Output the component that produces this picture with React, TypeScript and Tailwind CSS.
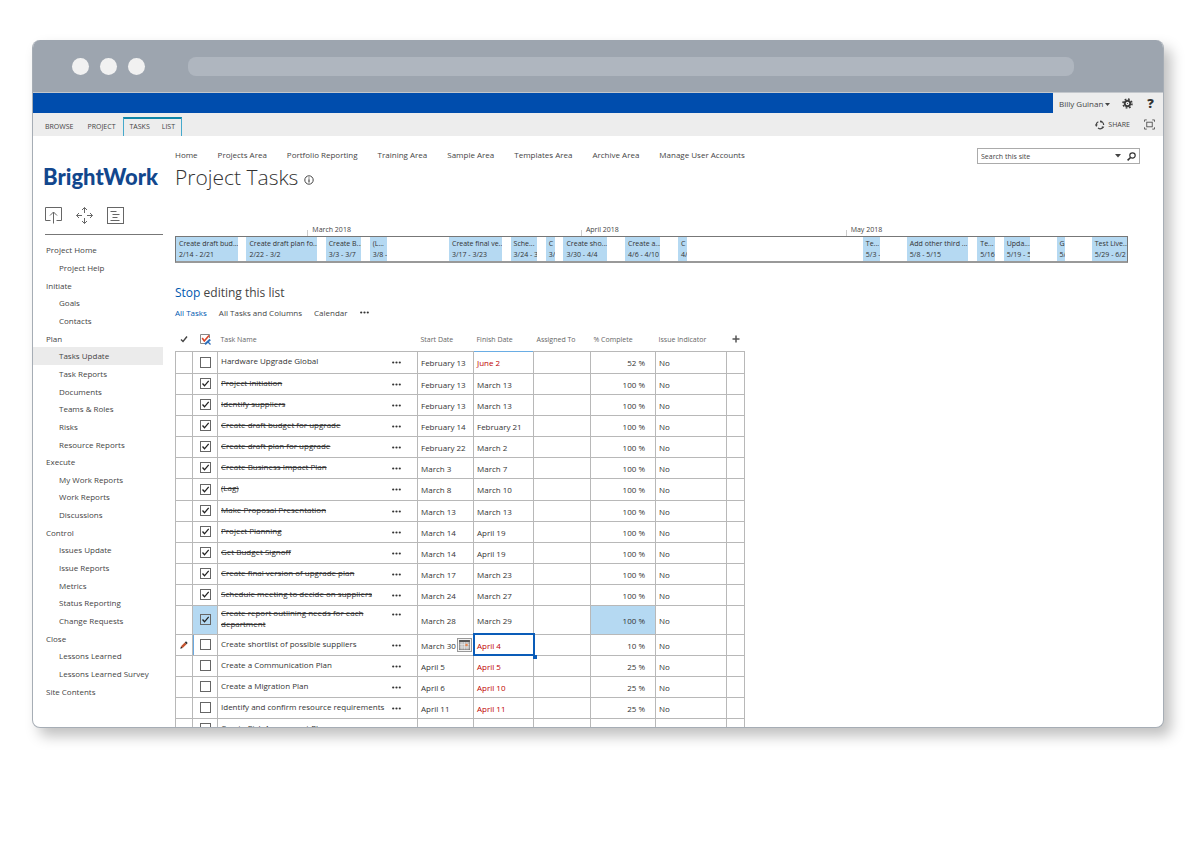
import { clsx } from 'clsx';

interface TimelineItem {
  start: number;
  days: number;
  label: string;
  range: string;
}

interface Task {
  name: string;
  start: string;
  finish: string;
  complete: number;
  done?: boolean;
  late?: boolean;
}

const TIMELINE_DAYS = 108;

const areas = [
  'Home',
  'Projects Area',
  'Portfolio Reporting',
  'Training Area',
  'Sample Area',
  'Templates Area',
  'Archive Area',
  'Manage User Accounts',
];

const sideNav = [
  { title: 'Project Home', links: ['Project Help'] },
  { title: 'Initiate', links: ['Goals', 'Contacts'] },
  {
    title: 'Plan',
    links: ['Tasks Update', 'Task Reports', 'Documents', 'Teams & Roles', 'Risks', 'Resource Reports'],
  },
  { title: 'Execute', links: ['My Work Reports', 'Work Reports', 'Discussions'] },
  {
    title: 'Control',
    links: ['Issues Update', 'Issue Reports', 'Metrics', 'Status Reporting', 'Change Requests'],
  },
  { title: 'Close', links: ['Lessons Learned', 'Lessons Learned Survey'] },
  { title: 'Site Contents', links: [] },
];

const months = [
  { start: 15, label: 'March 2018' },
  { start: 46, label: 'April 2018' },
  { start: 76, label: 'May 2018' },
];

// start is counted in days from 14 February
const timeline: TimelineItem[] = [
  { start: 0, days: 7, label: 'Create draft bud...', range: '2/14 - 2/21' },
  { start: 8, days: 8, label: 'Create draft plan fo...', range: '2/22 - 3/2' },
  { start: 17, days: 4, label: 'Create B...', range: '3/3 - 3/7' },
  { start: 22, days: 2, label: '(L...', range: '3/8 -' },
  { start: 31, days: 6, label: 'Create final ve...', range: '3/17 - 3/23' },
  { start: 38, days: 3, label: 'Sche...', range: '3/24 - 3' },
  { start: 42, days: 1, label: 'C', range: '3/' },
  { start: 44, days: 5, label: 'Create sho...', range: '3/30 - 4/4' },
  { start: 51, days: 4, label: 'Create a...', range: '4/6 - 4/10' },
  { start: 57, days: 1, label: 'C', range: '4/' },
  { start: 78, days: 2, label: 'Te...', range: '5/3 -' },
  { start: 83, days: 7, label: 'Add other third ...', range: '5/8 - 5/15' },
  { start: 91, days: 2, label: 'Te...', range: '5/16' },
  { start: 94, days: 3, label: 'Upda...', range: '5/19 - 5' },
  { start: 100, days: 1, label: 'G', range: '5/' },
  { start: 104, days: 4, label: 'Test Live...', range: '5/29 - 6/2' },
];

const tasks: Task[] = [
  { name: 'Hardware Upgrade Global', start: 'February 13', finish: 'June 2', complete: 52, late: true },
  { name: 'Project Initiation', start: 'February 13', finish: 'March 13', complete: 100, done: true },
  { name: 'Identify suppliers', start: 'February 13', finish: 'March 13', complete: 100, done: true },
  { name: 'Create draft budget for upgrade', start: 'February 14', finish: 'February 21', complete: 100, done: true },
  { name: 'Create draft plan for upgrade', start: 'February 22', finish: 'March 2', complete: 100, done: true },
  { name: 'Create Business Impact Plan', start: 'March 3', finish: 'March 7', complete: 100, done: true },
  { name: '(Lag)', start: 'March 8', finish: 'March 10', complete: 100, done: true },
  { name: 'Make Proposal Presentation', start: 'March 13', finish: 'March 13', complete: 100, done: true },
  { name: 'Project Planning', start: 'March 14', finish: 'April 19', complete: 100, done: true },
  { name: 'Get Budget Signoff', start: 'March 14', finish: 'April 19', complete: 100, done: true },
  { name: 'Create final version of upgrade plan', start: 'March 17', finish: 'March 23', complete: 100, done: true },
  { name: 'Schedule meeting to decide on suppliers', start: 'March 24', finish: 'March 27', complete: 100, done: true },
  { name: 'Create report outlining needs for each department', start: 'March 28', finish: 'March 29', complete: 100, done: true },
  { name: 'Create shortlist of possible suppliers', start: 'March 30', finish: 'April 4', complete: 10, late: true },
  { name: 'Create a Communication Plan', start: 'April 5', finish: 'April 5', complete: 25, late: true },
  { name: 'Create a Migration Plan', start: 'April 6', finish: 'April 10', complete: 25, late: true },
  { name: 'Identify and confirm resource requirements', start: 'April 11', finish: 'April 11', complete: 25, late: true },
  { name: 'Create Risk Assessment Plan', start: 'April 12', finish: 'April 13', complete: 25, late: true },
];

const HIGHLIGHT_ROW = 12;
const EDIT_ROW = 13;

function Dots() {
  return (
    <svg viewBox="0 0 9 3" className="h-[3px] w-[9px]" fill="#333">
      <circle cx="1.2" cy="1.5" r="1.1" />
      <circle cx="4.5" cy="1.5" r="1.1" />
      <circle cx="7.8" cy="1.5" r="1.1" />
    </svg>
  );
}

function BrowserBar() {
  return (
    <div className="flex h-[53px] items-center border-b border-[#c3c7cc] bg-[#9da5af] pr-[89px] pl-[39px]">
      <div className="flex gap-[11px]">
        <span className="size-[17px] rounded-full bg-[#f1f1f1]" />
        <span className="size-[17px] rounded-full bg-[#f1f1f1]" />
        <span className="size-[17px] rounded-full bg-[#f1f1f1]" />
      </div>
      <div className="ml-[43px] h-[19px] flex-1 rounded-lg bg-[#afb6bf]" />
    </div>
  );
}

function SuiteBar() {
  return (
    <div className="flex h-5 bg-[#004dad]">
      <div className="ml-auto flex w-[110px] items-center bg-[#ededed] pl-1.5">
        <button className="flex items-center gap-0.5 whitespace-nowrap">
          Billy Guinan
          <svg viewBox="0 0 5 3" className="mt-0.5 h-[3px] w-[5px]" fill="#444">
            <path d="M0 0h5L2.5 3z" />
          </svg>
        </button>
        <button aria-label="Settings" className="ml-3">
          <svg viewBox="0 0 12 12" className="size-[11px]" fill="none" stroke="#3c3c3c">
            <circle cx="6" cy="6" r="3" strokeWidth="2" />
            <circle cx="6" cy="6" r="4.9" strokeWidth="1.7" strokeDasharray="1.9 1.95" />
            <circle cx="6" cy="6" r="0.6" fill="#3c3c3c" stroke="none" />
          </svg>
        </button>
        <button aria-label="Help" className="ml-3.5 text-[13px] leading-4 font-extrabold text-[#333]">
          ?
        </button>
      </div>
    </div>
  );
}

function Ribbon() {
  return (
    <div className="flex h-[23px] items-center bg-[#ededed] pr-2 pl-3 text-[7px]">
      <button className="mt-1">BROWSE</button>
      <button className="mt-1 ml-3.5">PROJECT</button>
      <div className="ml-[7px] flex h-[19px] items-start gap-3 self-end border-x border-t-2 border-x-[#45a9cc] border-t-[#0f86a8] px-1.5 pt-0.5">
        <button>TASKS</button>
        <button>LIST</button>
      </div>
      <button className="ml-auto flex items-center gap-[3px]">
        <svg viewBox="0 0 12 12" className="size-[10px]" fill="none" stroke="#444" strokeWidth="1.5">
          <path d="M1.8 7.5A4.4 4.4 0 0 1 4 2.1M6 1.6a4.4 4.4 0 0 1 4.4 4.4M9.6 8.5A4.4 4.4 0 0 1 3.6 9.7" />
          <path d="M0 5.4h3.4L1.7 8zM6.8 0v3.6L9 2zM8 7.6l3.2.6-2 2.2z" fill="#444" stroke="none" />
        </svg>
        SHARE
      </button>
      <button aria-label="Focus on content" className="ml-3.5">
        <svg viewBox="0 0 12 12" className="size-[11px]" fill="none" stroke="#555">
          <rect x="3" y="3.5" width="6" height="5" />
          <path d="M.5 3V1H3M9 1h2.500V3M.5 9v2H3M9 11h2.500V9" />
        </svg>
      </button>
    </div>
  );
}

function Sidebar() {
  return (
    <aside className="w-[130px] shrink-0">
      <a href="#" className="mt-[27px] block pl-2.5 font-['Lato'] text-[22px] leading-7 font-black text-[#12478d]">
        BrightWork
      </a>
      <div className="mt-4 ml-3 flex gap-3.5 border-b border-[#777] pb-2.5">
        <svg viewBox="0 0 17 17" className="size-[17px]" fill="none" stroke="#666">
          <path d="M5.500 13.500H.5V.5h16v13h-5M8.500 16.500V5M5 8.500L8.500 5 12 8.500" />
        </svg>
        <svg viewBox="0 0 17 17" className="size-[17px]" fill="none" stroke="#666">
          <path d="M8.500 6V.5M6 3L8.500.5 11 3M8.500 11v5.500M6 14l2.500 2.500L11 14M6 8.500H.5M3 6L.5 8.500 3 11M11 8.500h5.500M14 6l2.500 2.500L14 11" />
        </svg>
        <svg viewBox="0 0 17 17" className="size-[17px]" fill="none" stroke="#666">
          <rect x=".5" y=".5" width="16" height="16" />
          <path d="M3.500 4.500h6M5.500 7.500h7M5.500 10.500h5M3.500 13.500h9" />
        </svg>
      </div>
      <nav className="mt-1.5 grid h-[459px] auto-rows-fr items-stretch">
        {sideNav.map((group) => (
          <div key={group.title} className="contents">
            <a href="#" className="flex items-center pl-[13px]">
              {group.title}
            </a>
            {group.links.map((link) => (
              <a
                key={link}
                href="#"
                className={clsx('flex items-center pl-[26px]', link === 'Tasks Update' && 'bg-[#ebebeb]')}
              >
                {link}
              </a>
            ))}
          </div>
        ))}
      </nav>
    </aside>
  );
}

function Timeline() {
  return (
    <div className="mt-8 mr-[35px] text-[7px] leading-[11px]">
      <div className="relative h-3">
        {months.map((month) => (
          <span
            key={month.label}
            className="absolute top-0 flex h-3 items-start gap-1"
            style={{ left: `${(month.start / TIMELINE_DAYS) * 100}%` }}
          >
            <i className="h-1.5 w-px self-end bg-[#ccc]" />
            {month.label}
          </span>
        ))}
      </div>
      <div className="relative h-[27px] border border-b-2 border-[#777] border-b-[#999]">
        {timeline.map((item) => (
          <div
            key={item.start}
            className="absolute inset-y-0 overflow-hidden bg-[#b5d9f2] pt-px pl-[3px] whitespace-nowrap text-[#333]"
            style={{
              left: `${(item.start / TIMELINE_DAYS) * 100}%`,
              width: `${(item.days / TIMELINE_DAYS) * 100}%`,
            }}
          >
            <p>{item.label}</p>
            <p>{item.range}</p>
          </div>
        ))}
      </div>
    </div>
  );
}

function TaskCheckbox({ task }: { task: Task }) {
  return (
    <span className="relative mx-auto block size-[11px]">
      <input
        type="checkbox"
        aria-label={task.name}
        defaultChecked={task.done}
        className="peer block size-[11px] appearance-none border border-[#666] bg-white checked:bg-transparent"
      />
      <svg
        viewBox="0 0 11 11"
        className="pointer-events-none absolute inset-0 hidden size-[11px] peer-checked:block"
        fill="none"
        stroke="#222"
        strokeWidth="1.300"
      >
        <path d="M2.500 5.500l2 2.300 4.200-5" />
      </svg>
    </span>
  );
}

function TaskRow({ task, index }: { task: Task; index: number }) {
  const highlighted = index === HIGHLIGHT_ROW;
  const editing = index === EDIT_ROW;

  return (
    <tr
      className={clsx(
        '*:border *:border-[#b8b8b8] *:p-0',
        highlighted ? 'h-[29px]' : index % 6 === 0 ? 'h-[22px]' : 'h-[21px]',
      )}
    >
      <td>
        {editing && (
          <svg viewBox="0 0 8 8" className="mx-auto size-2">
            <path d="M.3 7.700l.7-2.400 1.700 1.700z" fill="#222" />
            <path d="M1 5.300L4.800 1.500 6.500 3.200 2.700 7z" fill="#c4532f" />
            <path d="M4.800 1.500L6 .3 7.700 2 6.500 3.200z" fill="#333" />
          </svg>
        )}
      </td>
      <td className={clsx(highlighted && 'bg-[#b5d9f2]', editing && 'shadow-[inset_1px_0_0_#6aa9e0]')}>
        <TaskCheckbox task={task} />
      </td>
      <td>
        <div className="flex items-start justify-between pr-4 pb-[3px] pl-[3px]">
          <span className={clsx('max-w-[165px] leading-[11px]', task.done && 'line-through')}>{task.name}</span>
          <button aria-label="Open menu" className="mt-[6px]">
            <Dots />
          </button>
        </div>
      </td>
      <td>
        <div className="flex items-center justify-between pt-px pl-[3px] whitespace-nowrap">
          {task.start}
          {editing && (
            <button aria-label="Pick a date" className="mr-px border border-[#999] bg-[#f4f4f4] p-px">
              <svg viewBox="0 0 11 10" className="h-[10px] w-[11px]">
                <rect width="11" height="10" fill="#bbb" />
                <rect width="11" height="2" fill="#555" />
                <path d="M0 4.500h11M0 7h11M3 2v8M5.500 2v8M8 2v8" stroke="#eee" strokeWidth=".6" />
                <path d="M0 0v10h11V0" fill="none" stroke="#666" />
                <circle cx="7.500" cy="5" r="1.300" fill="#e8864f" />
              </svg>
            </button>
          )}
        </div>
      </td>
      <td
        className={clsx(
          'relative',
          task.late && 'text-[#c00000]',
          index === 0 && 'border-t-[#6aade4]!',
          editing && 'outline-2 -outline-offset-1 outline-[#0a5cb8]',
        )}
      >
        <div className="pt-px pl-[3px]">{task.finish}</div>
        {editing && <i className="absolute -right-1 -bottom-1 size-1 bg-[#0a5cb8]" />}
      </td>
      <td />
      <td className={clsx(highlighted && 'bg-[#b5d9f2]')}>
        <div className="pt-px pr-2.5 text-right">{task.complete} %</div>
      </td>
      <td>
        <div className="pt-px pl-[3px]">No</div>
      </td>
      <td />
    </tr>
  );
}

function TaskTable() {
  return (
    <table className="mt-2.5 w-[569px] table-fixed border-collapse text-[8px] leading-[11px] text-[#333]">
      <colgroup>
        <col className="w-[17px]" />
        <col className="w-[25px]" />
        <col className="w-[200px]" />
        <col className="w-[56px]" />
        <col className="w-[60px]" />
        <col className="w-[57px]" />
        <col className="w-[65px]" />
        <col className="w-[71px]" />
        <col className="w-[18px]" />
      </colgroup>
      <thead>
        <tr className="h-[23px] text-left text-[7px] text-[#666] *:p-0 *:pl-[3px] *:font-normal">
          <th aria-label="Selected" className="pl-0!">
            <svg viewBox="0 0 8 8" className="mx-auto size-2" fill="none" stroke="#444" strokeWidth="1.400">
              <path d="M1 4.500l2 2L7 1.500" />
            </svg>
          </th>
          <th aria-label="Complete" className="pl-0!">
            <svg viewBox="0 0 11 11" className="mx-auto size-[11px]" fill="none">
              <path d="M9.500 4V.5h-9v9h5" stroke="#888" />
              <path d="M2.200 4l2.100 3L9 1.500" stroke="#d8472b" strokeWidth="1.600" />
              <path d="M5 10.200L10.200 5.500" stroke="#2e6fba" strokeWidth="2" />
              <path d="M7.500 7.500l3 3" stroke="#2e6fba" strokeWidth="1.200" />
            </svg>
          </th>
          <th>Task Name</th>
          <th>Start Date</th>
          <th>Finish Date</th>
          <th>Assigned To</th>
          <th>% Complete</th>
          <th>Issue Indicator</th>
          <th aria-label="Add column">
            <svg viewBox="0 0 8 8" className="ml-0.5 size-2" stroke="#555" strokeWidth="1.500">
              <path d="M4 .5v7M.5 4h7" />
            </svg>
          </th>
        </tr>
      </thead>
      <tbody>
        {tasks.map((task, index) => (
          <TaskRow key={task.name} task={task} index={index} />
        ))}
      </tbody>
    </table>
  );
}

function SearchBox() {
  return (
    <form className="mt-3 flex h-4 w-[163px] items-center gap-1.5 border border-[#ababab] pr-[3px] pl-[3px]">
      <input
        aria-label="Search this site"
        defaultValue="Search this site"
        className="min-w-0 flex-1 text-[7px] outline-none"
      />
      <svg viewBox="0 0 6 4" className="h-1 w-1.5" fill="#444">
        <path d="M0 0h6L3 3.500z" />
      </svg>
      <button type="button" aria-label="Search">
        <svg viewBox="0 0 9 9" className="size-[9px]" fill="none" stroke="#333">
          <circle cx="5.500" cy="3.500" r="2.700" strokeWidth="1.200" />
          <path d="M3.500 5.500L.6 8.400" strokeWidth="1.600" />
        </svg>
      </button>
    </form>
  );
}

export default function App() {
  return (
    <div className="min-h-screen bg-white pt-10 pr-9 pb-28 pl-8 font-['Open_Sans',sans-serif] text-[8px] leading-[11px] text-[#444]">
      <div className="overflow-hidden rounded-lg border border-t-0 border-[#a6adb5] bg-white shadow-[7px_8px_14px_rgba(0,0,0,0.25)]">
        <BrowserBar />
        <SuiteBar />
        <Ribbon />
        <div className="flex max-h-[591px] overflow-hidden">
          <Sidebar />
          <main className="min-w-0 flex-1 pl-3">
            <div className="flex items-start justify-between pr-[23px]">
              <div>
                <nav className="mt-[13px] flex gap-5 whitespace-nowrap">
                  {areas.map((area) => (
                    <a key={area} href="#">
                      {area}
                    </a>
                  ))}
                </nav>
                <h1 className="mt-0.5 flex items-center gap-1.5 text-[21px] leading-[30px] font-light text-[#333]">
                  Project Tasks
                  <svg viewBox="0 0 10 10" className="mt-1.5 size-[10px]" fill="none" stroke="#444">
                    <circle cx="5" cy="5" r="4.200" />
                    <path d="M5 4.300v3.200M5 2.400v1.200" strokeWidth="1.200" />
                  </svg>
                </h1>
              </div>
              <SearchBox />
            </div>
            <Timeline />
            <p className="mt-[22px] text-[12px] leading-4">
              <a href="#" className="text-[#0058b0]">
                Stop
              </a>{' '}
              editing this list
            </p>
            <div className="mt-1.5 flex items-center gap-3">
              <a href="#" className="text-[#0058b0]">
                All Tasks
              </a>
              <a href="#">All Tasks and Columns</a>
              <a href="#">Calendar</a>
              <button aria-label="More views">
                <Dots />
              </button>
            </div>
            <TaskTable />
          </main>
        </div>
      </div>
    </div>
  );
}
